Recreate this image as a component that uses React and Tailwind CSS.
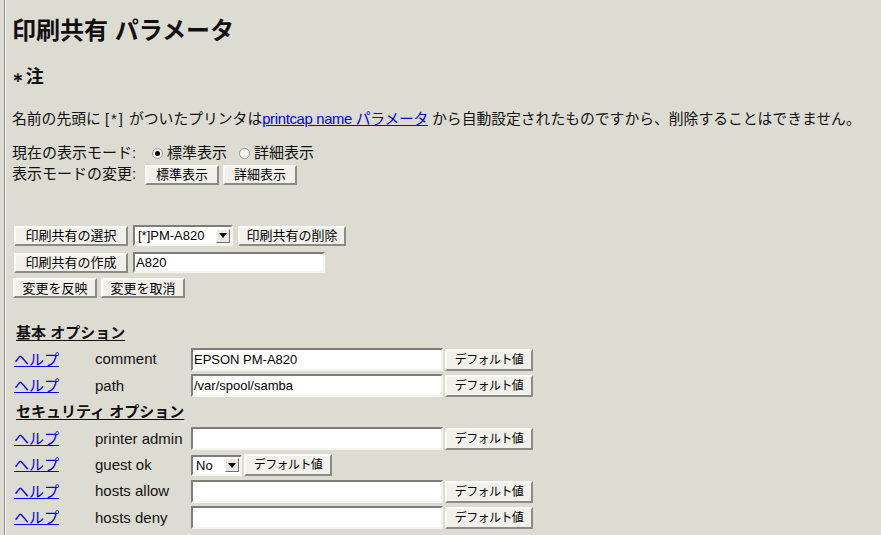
import React from 'react';

const FONT = { fontFamily: '"Liberation Sans", "Noto Sans CJK JP", sans-serif' };

function Btn({ children, className = '' }) {
  return (
    <button
      type="button"
      className={`h-[20px] px-2 text-[13px] leading-none text-black bg-[#f1f0eb] border-2 border-t-[#fbfbf8] border-l-[#fbfbf8] border-r-[#8a8a86] border-b-[#8a8a86] flex items-center justify-center whitespace-nowrap ${className}`}
    >
      {children}
    </button>
  );
}

function DefBtn() {
  return (
    <button
      type="button"
      className="h-[22px] w-[88px] text-[12px] tracking-[-0.6px] leading-none text-black bg-[#f1f0eb] border-2 border-t-[#fbfbf8] border-l-[#fbfbf8] border-r-[#8a8a86] border-b-[#8a8a86] flex items-center justify-center"
    >
      デフォルト値
    </button>
  );
}

function TextBox({ value = '', className = '' }) {
  return (
    <div
      className={`bg-white border-2 border-t-[#7d7d7a] border-l-[#7d7d7a] border-r-[#f4f4f0] border-b-[#f4f4f0] text-[13px] leading-none flex items-center pl-[1px] text-black ${className}`}
    >
      {value}
    </div>
  );
}

function SelectBox({ value, className = '' }) {
  return (
    <div
      className={`bg-white border-2 border-t-[#7d7d7a] border-l-[#7d7d7a] border-r-[#f4f4f0] border-b-[#f4f4f0] text-[13px] leading-none flex items-center justify-between pl-[3px] pr-[1px] text-black ${className}`}
    >
      <span>{value}</span>
      <span className="w-[14px] h-[14px] bg-[#e8e7e2] border border-t-white border-l-white border-r-[#6f6f6c] border-b-[#6f6f6c] flex items-center justify-center">
        <svg width="8" height="5" viewBox="0 0 8 5">
          <path d="M0 0 H8 L4 5 Z" fill="#000" />
        </svg>
      </span>
    </div>
  );
}

function Radio({ checked }) {
  return (
    <span className="w-[11px] h-[11px] rounded-full bg-[#f4f4f0] border border-[#9a9a96] flex items-center justify-center">
      {checked && <span className="w-[5px] h-[5px] rounded-full bg-black" />}
    </span>
  );
}

function Help() {
  return <a href="#" className="text-[#0000ee] underline text-[15px]">ヘルプ</a>;
}

function OptionRow({ label, children }) {
  return (
    <div className="grid grid-cols-[81px_96px_1fr] items-center h-[26.4px]">
      <div><Help /></div>
      <div className="text-[15px] text-[#111]">{label}</div>
      <div className="flex items-center gap-[2px]">{children}</div>
    </div>
  );
}

function SectionTitle({ children }) {
  return (
    <div className="h-[26.4px] flex items-center pl-[2px]">
      <span className="text-[15px] font-bold underline underline-offset-2 text-[#111]">{children}</span>
    </div>
  );
}

export default function App() {
  return (
    <div className="min-h-screen w-full bg-[#dddcd2] pl-[4px] flex" style={FONT}>
      <div className="border-l border-[#8c8c88] flex-1 flex">
        <div className="border-l border-[#f6f6f2] flex-1 pl-[6px] text-[#111]">
          <h1 className="pt-[17px] text-[24px] leading-[28px] font-bold">印刷共有 パラメータ</h1>

          <h3 className="mt-[20px] h-[24px] text-[18px] leading-[24px] font-bold flex items-center">
            <span className="text-[14px] leading-none mr-[2px]" style={{ fontFamily: '"DejaVu Sans", sans-serif' }}>∗</span>注
          </h3>

          <p className="mt-[20px] text-[14.8px] leading-[20px] whitespace-nowrap">
            名前の先頭に <span className="tracking-[2px]">[*]</span> がついたプリンタは
            <a href="#" className="text-[#0000ee] underline tracking-[-0.3px]">printcap name パラメータ</a>
            {' '}から自動設定されたものですから、削除することはできません。
          </p>

          <div className="mt-[14px] text-[15px]">
            <div className="h-[21px] flex items-center">
              <span className="w-[140px]">現在の表示モード:</span>
              <span className="flex items-center gap-[4px]"><Radio checked /><span>標準表示</span></span>
              <span className="flex items-center gap-[4px] ml-[12px]"><Radio /><span>詳細表示</span></span>
            </div>
            <div className="h-[21px] flex items-center">
              <span className="w-[133px]">表示モードの変更:</span>
              <Btn className="w-[74px]">標準表示</Btn>
              <Btn className="w-[74px] ml-[4px]">詳細表示</Btn>
            </div>
          </div>

          <div className="mt-[40px] flex items-center gap-[3px] pl-[2px]">
            <Btn className="w-[114px]">印刷共有の選択</Btn>
            <SelectBox value="[*]PM-A820" className="w-[100px] h-[21px] ml-[2px]" />
            <Btn className="w-[108px] ml-[2px]">印刷共有の削除</Btn>
          </div>
          <div className="mt-[6px] flex items-center gap-[3px] pl-[2px]">
            <Btn className="w-[114px]">印刷共有の作成</Btn>
            <TextBox value="A820" className="w-[192px] h-[21px] ml-[2px]" />
          </div>
          <div className="mt-[5px] flex items-center gap-[4px] pl-[1px]">
            <Btn className="w-[84px]">変更を反映</Btn>
            <Btn className="w-[84px]">変更を取消</Btn>
          </div>

          <div className="mt-[22px] pl-[2px]">
            <SectionTitle>基本 オプション</SectionTitle>
            <OptionRow label="comment">
              <TextBox value="EPSON PM-A820" className="w-[252px] h-[23px]" />
              <DefBtn />
            </OptionRow>
            <OptionRow label="path">
              <TextBox value="/var/spool/samba" className="w-[252px] h-[23px]" />
              <DefBtn />
            </OptionRow>
            <SectionTitle>セキュリティ オプション</SectionTitle>
            <OptionRow label="printer admin">
              <TextBox className="w-[252px] h-[23px]" />
              <DefBtn />
            </OptionRow>
            <OptionRow label="guest ok">
              <SelectBox value="No" className="w-[51px] h-[21px]" />
              <DefBtn />
            </OptionRow>
            <OptionRow label="hosts allow">
              <TextBox className="w-[252px] h-[23px]" />
              <DefBtn />
            </OptionRow>
            <OptionRow label="hosts deny">
              <TextBox className="w-[252px] h-[23px]" />
              <DefBtn />
            </OptionRow>
          </div>
        </div>
      </div>
    </div>
  );
}
